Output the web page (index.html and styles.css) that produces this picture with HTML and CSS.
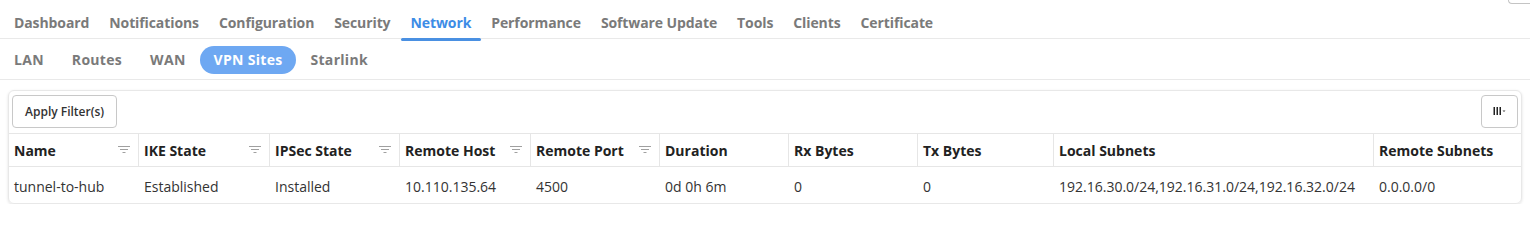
FILE: index.html
```html
<!DOCTYPE html>
<html lang="en">
<head>
    <meta charset="UTF-8">
    <meta name="viewport" content="width=device-width, initial-scale=1.0">
    <title>VPN Sites</title>
    <link rel="stylesheet" href="styles.css">
</head>
<body>

    <div class="corner"></div>

    <!-- Main navigation -->
    <nav class="main-tabs">
        <a class="tab">Dashboard</a>
        <a class="tab">Notifications</a>
        <a class="tab">Configuration</a>
        <a class="tab">Security</a>
        <a class="tab active">Network</a>
        <a class="tab">Performance</a>
        <a class="tab">Software Update</a>
        <a class="tab">Tools</a>
        <a class="tab">Clients</a>
        <a class="tab">Certificate</a>
    </nav>

    <!-- Network sub navigation -->
    <nav class="sub-tabs">
        <a class="pill">LAN</a>
        <a class="pill">Routes</a>
        <a class="pill">WAN</a>
        <a class="pill active">VPN Sites</a>
        <a class="pill">Starlink</a>
    </nav>

    <div class="card">
        <div class="toolbar">
            <button class="btn">Apply Filter(s)</button>
            <button class="btn btn-cols" title="Columns">
                <svg width="14" height="9" viewBox="0 0 14 9">
                    <rect x="0.5" y="0" width="1.5" height="8" fill="#222"/>
                    <rect x="3.5" y="0" width="1.5" height="8" fill="#222"/>
                    <rect x="6.5" y="0" width="1.5" height="8" fill="#222"/>
                    <path d="M9.5 3.5 L12.5 3.5 L11 5 Z" fill="#444"/>
                </svg>
            </button>
        </div>

        <div class="grid">
            <div class="row head">
                <div class="cell">Name <svg class="filter" width="12" height="8" viewBox="0 0 12 8"><path d="M0 0.5H12M2 3.5H10M4.5 6.5H7.5" stroke="#a0a0a0" stroke-width="1"/></svg></div>
                <div class="cell">IKE State <svg class="filter" width="12" height="8" viewBox="0 0 12 8"><path d="M0 0.5H12M2 3.5H10M4.5 6.5H7.5" stroke="#a0a0a0" stroke-width="1"/></svg></div>
                <div class="cell">IPSec State <svg class="filter" width="12" height="8" viewBox="0 0 12 8"><path d="M0 0.5H12M2 3.5H10M4.5 6.5H7.5" stroke="#a0a0a0" stroke-width="1"/></svg></div>
                <div class="cell">Remote Host <svg class="filter" width="12" height="8" viewBox="0 0 12 8"><path d="M0 0.5H12M2 3.5H10M4.5 6.5H7.5" stroke="#a0a0a0" stroke-width="1"/></svg></div>
                <div class="cell">Remote Port <svg class="filter" width="12" height="8" viewBox="0 0 12 8"><path d="M0 0.5H12M2 3.5H10M4.5 6.5H7.5" stroke="#a0a0a0" stroke-width="1"/></svg></div>
                <div class="cell">Duration</div>
                <div class="cell">Rx Bytes</div>
                <div class="cell">Tx Bytes</div>
                <div class="cell">Local Subnets</div>
                <div class="cell">Remote Subnets</div>
            </div>
            <div class="row body">
                <div class="cell">tunnel-to-hub</div>
                <div class="cell">Established</div>
                <div class="cell">Installed</div>
                <div class="cell">10.110.135.64</div>
                <div class="cell">4500</div>
                <div class="cell">0d 0h 6m</div>
                <div class="cell">0</div>
                <div class="cell">0</div>
                <div class="cell">192.16.30.0/24,192.16.31.0/24,192.16.32.0/24</div>
                <div class="cell">0.0.0.0/0</div>
            </div>
        </div>
    </div>

</body>
</html>
```

FILE: styles.css
```css
* {
    margin: 0;
    padding: 0;
    box-sizing: border-box;
}

body {
    font-family: "Open Sans", "Liberation Sans", sans-serif;
    background-color: #ffffff;
    color: #333333;
}

/* bit of the panel above, cut off at the top */
.corner {
    width: 22px;
    height: 4px;
    margin-left: auto;
    border-left: 1px solid #c4c4c4;
    border-bottom: 1px solid #c4c4c4;
    border-bottom-left-radius: 5px;
}

.main-tabs {
    display: flex;
    padding: 9px 0 0 4px;
    border-bottom: 1px solid #e9e9e9;
}

.main-tabs .tab {
    position: relative;
    padding: 0 10px 5px;
    font-size: 14px;
    line-height: 20px;
    font-weight: 700;
    letter-spacing: -0.1px;
    color: #7a7a7a;
    cursor: pointer;
}

.main-tabs .tab.active {
    color: #3d8ce6;
}

.main-tabs .tab.active::after {
    content: "";
    position: absolute;
    left: 0;
    right: 0;
    bottom: -3px;
    height: 3px;
    border-radius: 2px;
    background-color: #4a90e2;
}

.sub-tabs {
    display: flex;
    padding: 7px 0 5px;
    border-bottom: 1px solid #e9e9e9;
}

.sub-tabs .pill {
    padding: 0 14px;
    font-size: 14px;
    line-height: 28px;
    font-weight: 700;
    letter-spacing: 0.3px;
    color: #7a7a7a;
    border-radius: 14px;
    cursor: pointer;
}

.sub-tabs .pill.active {
    background-color: #6ea8f2;
    color: #ffffff;
}

.card {
    margin: 10px 8px 0;
    border: 1px solid #e8e8e8;
    border-radius: 6px;
    box-shadow: 0 1px 3px rgba(0, 0, 0, 0.12);
}

.toolbar {
    display: flex;
    justify-content: space-between;
    padding: 4px 3px 5px;
}

.btn {
    height: 33px;
    padding: 0 12px;
    border: 1px solid #c8c8c8;
    border-radius: 4px;
    background-color: #ffffff;
    font-family: inherit;
    font-size: 12px;
    font-weight: 600;
    color: #333333;
    cursor: pointer;
}

.btn-cols {
    width: 37px;
    padding: 0;
    display: flex;
    align-items: center;
    justify-content: center;
}

.row {
    display: grid;
    grid-template-columns: 130px 131px 130px 131px 129px 129px 129px 136px 320px 1fr;
}

.row.head {
    height: 34px;
    border-top: 1px solid #e6e6e6;
    border-bottom: 1px solid #e6e6e6;
}

.row.body {
    height: 36px;
}

.cell {
    display: flex;
    align-items: center;
    padding: 0 8px 0 5px;
    font-size: 14px;
    white-space: nowrap;
}

.head .cell {
    justify-content: space-between;
    font-weight: 700;
    color: #222222;
    border-right: 1px solid #e6e6e6;
}

.head .cell:last-child {
    border-right: none;
}

.body .cell {
    padding-top: 2px;
    color: #333333;
}

.filter {
    flex-shrink: 0;
}
```
